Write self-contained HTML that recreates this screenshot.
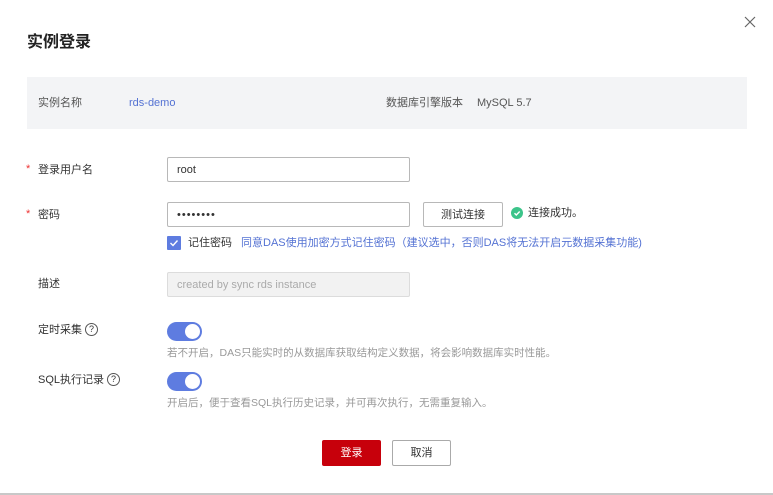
<!DOCTYPE html><html><head><meta charset="utf-8"><style>
body{margin:0;width:773px;height:495px;background:#fff;position:relative;overflow:hidden;font-family:"Liberation Sans","Noto Sans CJK SC",sans-serif;font-size:11px;color:#333}
.a{position:absolute;white-space:nowrap;line-height:14px}
.in{position:absolute;box-sizing:border-box;border:1px solid #b8b8b8;border-radius:2px;height:25px;width:243px;left:167px;padding-left:9px;padding-top:5px;line-height:14px;font-size:11px}
.tg{position:absolute;left:167px;width:35px;height:19px;border-radius:10px;background:#5e7ce0}
.tg:after{content:"";position:absolute;right:2px;top:2px;width:15px;height:15px;border-radius:50%;background:#fff}
.q{display:inline-block;width:11px;height:11px;border:1px solid #555;border-radius:50%;font-size:9px;line-height:11px;text-align:center;margin-left:3px;vertical-align:top}
.hint{color:#999;font-size:10.5px}
.st{color:#e33;font-size:11px}
</style></head><body>
<div class="a" style="left:27px;top:33px;font-size:16px;line-height:20px;font-weight:bold;color:#222">实例登录</div>
<svg class="a" style="left:744px;top:16px" width="12" height="12"><path d="M1 1L11 11M11 1L1 11" stroke="#666" stroke-width="1.2"/></svg>
<div class="a" style="left:27px;top:77px;width:720px;height:52px;background:#f3f4f6"></div>
<div class="a" style="left:38px;top:96px;color:#555">实例名称</div>
<div class="a" style="left:129px;top:96px;color:#5472d3">rds-demo</div>
<div class="a" style="left:386px;top:96px;color:#555">数据库引擎版本</div>
<div class="a" style="left:477px;top:96px;color:#555">MySQL 5.7</div>
<div class="a st" style="left:26px;top:162px">*</div>
<div class="a" style="left:38px;top:163px">登录用户名</div>
<div class="in" style="top:157px">root</div>
<div class="a st" style="left:26px;top:207px">*</div>
<div class="a" style="left:38px;top:208px">密码</div>
<div class="in" style="top:202px;letter-spacing:1px">••••••••</div>
<div class="a" style="left:423px;top:202px;width:80px;height:25px;box-sizing:border-box;border:1px solid #b8b8b8;border-radius:2px;text-align:center;padding-top:5px">测试连接</div>
<div class="a" style="left:511px;top:207px;width:12px;height:12px;border-radius:50%;background:#3cc48a"></div>
<svg class="a" style="left:511px;top:207px" width="12" height="12"><path d="M3.5 6.2L5.3 8L8.7 4.5" stroke="#fff" stroke-width="1.4" fill="none"/></svg>
<div class="a" style="left:528px;top:206px">连接成功。</div>
<div class="a" style="left:167px;top:236px;width:14px;height:14px;background:#5e7ce0;border-radius:1px"></div>
<svg class="a" style="left:167px;top:236px" width="14" height="14"><path d="M3.5 7L6 9.5L10.5 4.5" stroke="#fff" stroke-width="1.4" fill="none"/></svg>
<div class="a" style="left:188px;top:236px">记住密码</div>
<div class="a" style="left:241px;top:236px;color:#5472d3">同意DAS使用加密方式记住密码（建议选中，否则DAS将无法开启元数据采集功能)</div>
<div class="a" style="left:38px;top:277px">描述</div>
<div class="in" style="top:272px;background:#f2f2f2;border-color:#dcdcdc;color:#aaa">created by sync rds instance</div>
<div class="a" style="left:38px;top:323px">定时采集<span class="q">?</span></div>
<div class="tg" style="top:322px"></div>
<div class="a hint" style="left:167px;top:346px">若不开启，DAS只能实时的从数据库获取结构定义数据，将会影响数据库实时性能。</div>
<div class="a" style="left:38px;top:373px">SQL执行记录<span class="q">?</span></div>
<div class="tg" style="top:372px"></div>
<div class="a hint" style="left:167px;top:396px">开启后，便于查看SQL执行历史记录，并可再次执行，无需重复输入。</div>
<div class="a" style="left:322px;top:440px;width:59px;height:26px;background:#c7000b;color:#fff;border-radius:2px;text-align:center;line-height:26px">登录</div>
<div class="a" style="left:392px;top:440px;width:59px;height:26px;box-sizing:border-box;border:1px solid #aaa;border-radius:2px;text-align:center;line-height:24px">取消</div>
<div class="a" style="left:0;top:493px;width:773px;height:2px;background:#c8c8c8"></div>
</body></html>
